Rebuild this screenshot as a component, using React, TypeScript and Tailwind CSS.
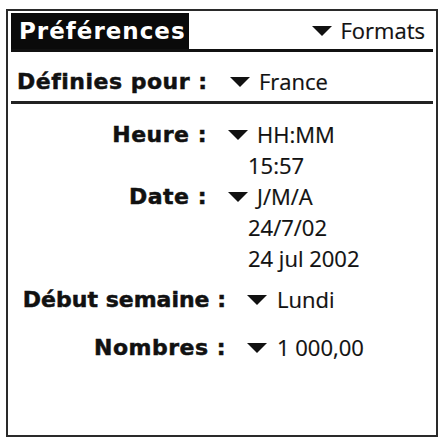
import React from "react";

const bold = "font-['DejaVu_Sans',sans-serif] font-bold [-webkit-text-stroke:0.5px_#111]";
const plain = "font-['Open_Sans',sans-serif] [-webkit-text-stroke:0.2px_#111]";

function Arrow() {
  return (
    <svg width="20" height="10" viewBox="0 0 20 10" className="shrink-0">
      <polygon points="0,0 20,0 10,10" fill="#111" />
    </svg>
  );
}

function Pick({ children, gap = "gap-[9px]" }: { children: React.ReactNode; gap?: string }) {
  return (
    <div className={`flex items-center ${gap} text-[22px] text-[#111] ${plain}`}>
      <Arrow />
      <span>{children}</span>
    </div>
  );
}

export default function App() {
  return (
    <div className="w-[440px] h-[439px] bg-white pt-[9px] pl-[6px]">
      <div className="w-[432px] h-[428px] border-2 border-[#2a2a2a] px-[3px] pt-[2px] flex flex-col">
        {/* title bar */}
        <div className="flex items-stretch justify-between border-b-[3px] border-[#111] h-[39px]">
          <div className="w-[178px] bg-[#0a0a0a] text-white text-[23px] pl-[8px] pt-[7px] leading-none tracking-[1px] font-['DejaVu_Sans',sans-serif] font-bold">
            Préférences
          </div>
          <div className="pr-[8px] pt-[1px]">
            <Pick>Formats</Pick>
          </div>
        </div>

        {/* locale */}
        <div className="flex items-center h-[52px] border-b-[3px] border-[#222] pl-[6px] pt-[14px] pb-[4px]">
          <span className={`text-[22px] text-[#111] w-[213px] tracking-[0.5px] ${bold}`}>Définies pour :</span>
          <Pick>France</Pick>
        </div>

        <div className="flex flex-col pt-[15px]">
          <div className="grid grid-cols-[196px_1fr] gap-x-[21px]">
            <div className={`text-right text-[22px] text-[#111] leading-[31px] tracking-[0.5px] ${bold}`}>Heure :</div>
            <div className="leading-[31px]">
              <Pick>HH:MM</Pick>
            </div>
            <div />
            <div className={`pl-[20px] text-[22px] text-[#111] leading-[31px] ${plain}`}>15:57</div>
            <div className={`text-right text-[22px] text-[#111] leading-[31px] tracking-[0.5px] ${bold}`}>Date :</div>
            <div className="leading-[31px]">
              <Pick>J/M/A</Pick>
            </div>
            <div />
            <div className={`pl-[20px] text-[22px] text-[#111] leading-[31px] ${plain}`}>
              24/7/02
              <br />
              24 jul 2002
            </div>
          </div>

          <div className="grid grid-cols-[215px_1fr] gap-x-[21px] gap-y-[17px] mt-[10px]">
            <div className={`text-right text-[22px] text-[#111] leading-[31px] ${bold}`}>Début semaine :</div>
            <div className="leading-[31px]">
              <Pick gap="gap-[10px]">Lundi</Pick>
            </div>
            <div className={`text-right text-[22px] text-[#111] leading-[31px] tracking-[0.5px] ${bold}`}>Nombres :</div>
            <div className="leading-[31px]">
              <Pick gap="gap-[10px]">1 000,00</Pick>
            </div>
          </div>
        </div>
      </div>
    </div>
  );
}
